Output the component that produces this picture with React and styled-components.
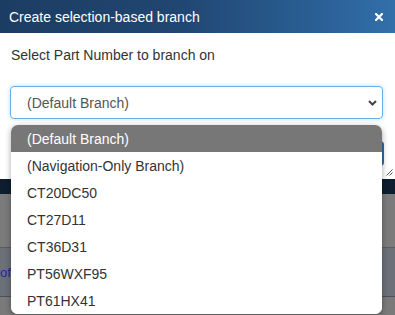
import React from 'react';
import styled, { createGlobalStyle } from 'styled-components';

const GlobalStyle = createGlobalStyle`
  body {
    margin: 0;
    font-family: "Liberation Sans", Arial, sans-serif;
    background: #7a7a7a;
  }
`;

const Page = styled.div`
  position: relative;
  width: 395px;
  height: 315px;
  overflow: hidden;
  background: #7a7a7a;
`;

const Dialog = styled.div`
  background: #fff;
`;

const Header = styled.div`
  height: 33px;
  display: flex;
  align-items: center;
  justify-content: space-between;
  padding: 0 12px 0 9px;
  background: linear-gradient(90deg, #1c3d63 0%, #204671 45%, #2c639a 85%, #3270a9 100%);
  color: #fff;
  font-size: 14px;
`;

const Close = styled.span`
  display: flex;
  width: 8px;
  height: 8px;
`;

const Body = styled.div`
  position: relative;
  height: 146px;
  box-sizing: border-box;
  padding: 12px 11px 0 10px;
`;

const Label = styled.div`
  font-size: 14px;
  line-height: 20px;
  color: #333;
  padding-left: 1px;
`;

const SelectBox = styled.div`
  margin-top: 21px;
  margin-right: 1px;
  height: 33px;
  box-sizing: border-box;
  border: 1px solid #66afe9;
  border-radius: 4px;
  box-shadow: 0 0 4px rgba(102, 175, 233, 0.45);
  display: flex;
  align-items: center;
  justify-content: space-between;
  padding: 1px 5px 0 16px;
  font-size: 14px;
  color: #555;
`;

const Footer = styled.div`
  margin-top: 22px;
  display: flex;
  justify-content: flex-end;
`;

const PrimaryButton = styled.div`
  width: 90px;
  height: 25px;
  border-radius: 4px;
  background: #2e6da4;
`;

const Grip = styled.svg`
  position: absolute;
  right: 2px;
  bottom: 3px;
`;

const DarkBand = styled.div`
  height: 15px;
  background: #0e1e2f;
`;

const GrayPanel = styled.div`
  height: 53px;
  background: #7b7b7b;
  border-bottom: 1px solid #5c5c5c;
`;

const LinkPanel = styled.div`
  height: 48px;
  background: #6c7079;
  border-bottom: 1px solid #4e5259;
  display: flex;
  align-items: center;
`;

const LinkText = styled.span`
  font-size: 13px;
  color: #1f2a9c;
`;

const OptionList = styled.div`
  position: absolute;
  left: 11px;
  top: 125px;
  width: 371px;
  background: #fff;
  border-radius: 7px;
  overflow: hidden;
  box-shadow: 0 2px 6px rgba(0, 0, 0, 0.35);
`;

const Option = styled.div`
  height: 27px;
  box-sizing: border-box;
  padding: 2px 0 0 16px;
  line-height: 25px;
  font-size: 14px;
  color: ${p => (p.$active ? '#fff' : '#333')};
  background: ${p => (p.$active ? '#777' : '#fff')};
`;

const options = [
  '(Default Branch)',
  '(Navigation-Only Branch)',
  'CT20DC50',
  'CT27D11',
  'CT36D31',
  'PT56WXF95',
  'PT61HX41',
];

export default function App() {
  return (
    <>
      <GlobalStyle />
      <Page>
        <Dialog>
          <Header>
            <span>Create selection-based branch</span>
            <Close>
              <svg width="8" height="8" viewBox="0 0 8 8">
                <path d="M1 1 L7 7 M7 1 L1 7" stroke="#fff" strokeWidth="2.2" strokeLinecap="square" />
              </svg>
            </Close>
          </Header>
          <Body>
            <Label>Select Part Number to branch on</Label>
            <SelectBox>
              <span>(Default Branch)</span>
              <svg width="9" height="6" viewBox="0 0 9 6">
                <polyline points="1,1 4.5,4.5 8,1" fill="none" stroke="#444" strokeWidth="2" />
              </svg>
            </SelectBox>
            <Footer>
              <PrimaryButton />
            </Footer>
            <Grip width="7" height="7" viewBox="0 0 7 7">
              <path d="M0.5 6.5 L6.5 0.5 M3.5 6.5 L6.5 3.5" stroke="#555" strokeWidth="1" />
            </Grip>
          </Body>
        </Dialog>
        <DarkBand />
        <GrayPanel />
        <LinkPanel>
          <LinkText>of T</LinkText>
        </LinkPanel>
        <OptionList>
          {options.map((o, i) => (
            <Option key={o} $active={i === 0}>{o}</Option>
          ))}
        </OptionList>
      </Page>
    </>
  );
}
